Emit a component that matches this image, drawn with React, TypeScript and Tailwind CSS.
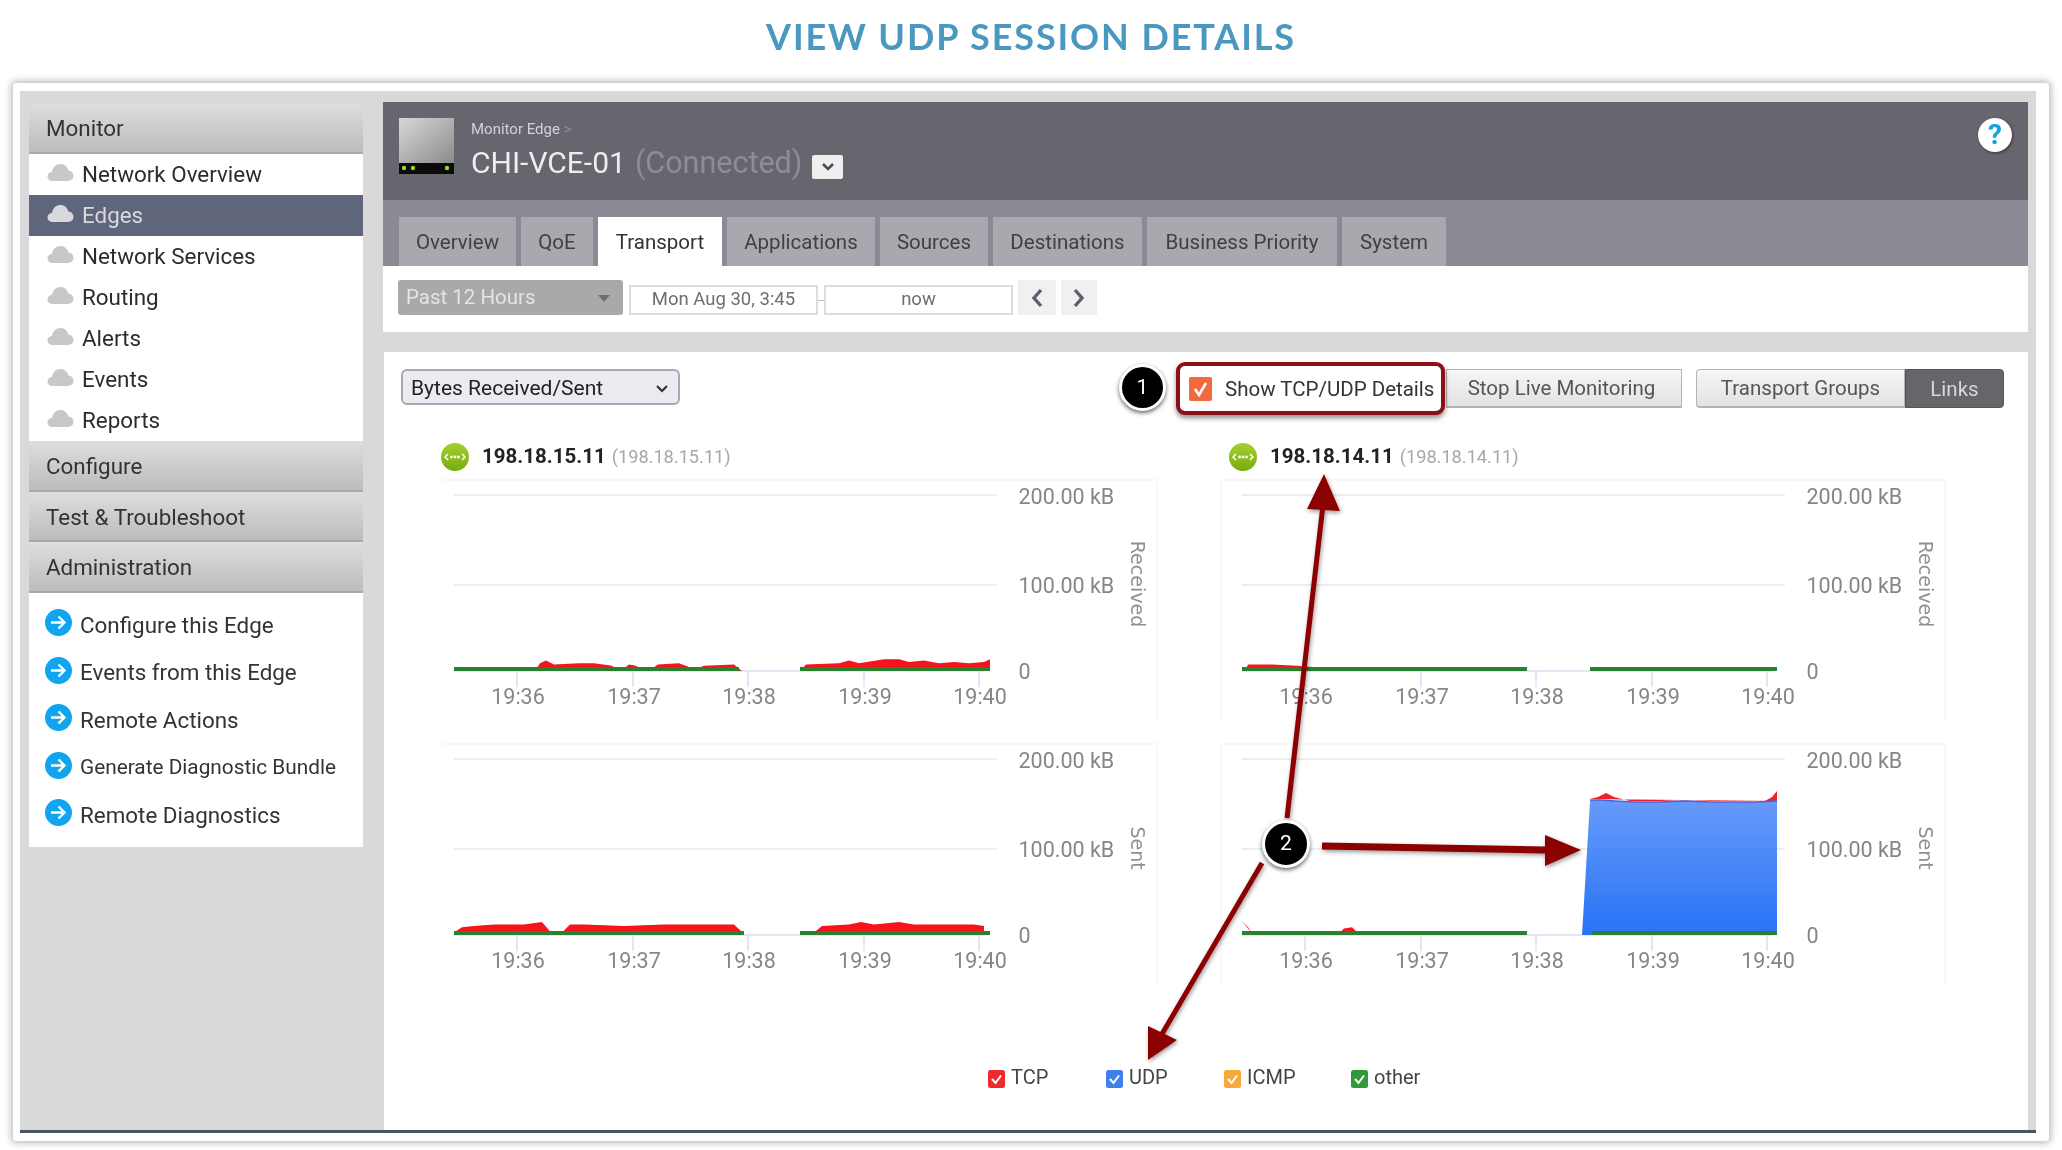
import React from "react";

const font = { fontFamily: "Roboto, 'Liberation Sans', sans-serif" };

function Cloud({ light }: { light?: boolean }) {
  return (
    <svg width="27" height="20" viewBox="0 0 27 20" className="shrink-0">
      <path
        d="M6 19C2.6 19 .5 17 .5 14.4 .5 11.8 2.6 10 5 10c.6-4.5 4-8 8.4-8 4 0 7 2.6 7.9 6.4 3.2.2 5.2 2.6 5.2 5.4 0 3-2.2 5.2-5.5 5.2z"
        fill={light ? "#d8d8de" : "#c8c8c8"}
      />
    </svg>
  );
}

function GoIcon() {
  return (
    <svg width="27" height="27" viewBox="0 0 27 27" className="shrink-0 -mt-[5px]">
      <circle cx="13.5" cy="13.5" r="13.5" fill="#10a5ee" />
      <path d="M6 13.5h13M13.5 7.5l6 6-6 6" fill="none" stroke="#fff" strokeWidth="2.4" />
    </svg>
  );
}

function NodeIcon() {
  return (
    <svg width="28" height="28" viewBox="0 0 28 28" className="shrink-0">
      <defs>
        <linearGradient id="ng" x1="0" y1="0" x2="0" y2="1">
          <stop offset="0" stopColor="#a6d02e" />
          <stop offset="1" stopColor="#75ad10" />
        </linearGradient>
      </defs>
      <circle cx="14" cy="14" r="14" fill="url(#ng)" />
      <path d="M7 11l-3 3 3 3M21 11l3 3-3 3" fill="none" stroke="#fff" strokeWidth="1.5" />
      <circle cx="10.5" cy="14" r="1.4" fill="#fff" />
      <circle cx="14" cy="14" r="1.4" fill="#fff" />
      <circle cx="17.5" cy="14" r="1.4" fill="#fff" />
    </svg>
  );
}

function Header({ children }: { children: React.ReactNode }) {
  return (
    <div className="h-[50.5px] flex items-center pl-[17px] pt-[3px] text-[22.4px] text-[#333] bg-gradient-to-b from-[#dedede] to-[#bcbcbc] border-b-2 border-[#a9a9a9]">
      {children}
    </div>
  );
}

const monitorItems = ["Network Overview", "Edges", "Network Services", "Routing", "Alerts", "Events", "Reports"];
const adminItems = ["Configure this Edge", "Events from this Edge", "Remote Actions", "Generate Diagnostic Bundle", "Remote Diagnostics"];
const tabs: [string, number][] = [
  ["Overview", 117],
  ["QoE", 72],
  ["Transport", 124],
  ["Applications", 148],
  ["Sources", 108],
  ["Destinations", 149],
  ["Business Priority", 190],
  ["System", 104],
];

type P = [number, number];

function area(points: P[], base: number, ox: number, k = 1) {
  return points.map(([x, h]) => `${x + ox},${base - h * k}`).join(" ");
}

const redTopLeft: P[] = [
  [81, 0], [86, 6], [92, 8], [100, 5], [125, 6], [140, 6], [158, 4], [165, 0], [170, 2], [175, 5], [182, 4], [188, 1],
  [196, 1], [204, 5], [225, 6], [235, 3], [240, 1], [250, 4], [280, 5], [288, 0],
];
const redTopLeft2: P[] = [
  [346, 0], [352, 5], [385, 6], [395, 8], [405, 6], [430, 9], [445, 9], [455, 7], [470, 8], [485, 6], [500, 7], [515, 6], [530, 7], [536, 9], [536, 0],
];
const redBotLeft: P[] = [
  [0, 2], [8, 6], [20, 7], [40, 8], [70, 8], [88, 10], [97, 2], [108, 2], [116, 8], [130, 8], [170, 7], [210, 8], [280, 8], [290, 1],
];
const redBotLeft2: P[] = [
  [346, 0], [360, 2], [368, 7], [395, 8], [407, 10], [420, 8], [445, 10], [460, 8], [495, 8], [520, 8], [530, 7], [530, 0],
];
const redTopRight: P[] = [[3, 0], [6, 5], [30, 5], [55, 4], [70, 3], [88, 0]];
const redBotRight: P[] = [[0, 11], [6, 6], [11, 0]];
const redBotRight2: P[] = [[95, 0], [102, 5], [110, 6], [118, 0]];
const blueTop: P[] = [
  [348, 135], [358, 135], [373, 134], [393, 133], [418, 133], [443, 134], [468, 133], [498, 133], [513, 133], [535, 134],
];
const blueRed: P[] = [
  [348, 136], [356, 138], [364, 142], [372, 138], [388, 134], [418, 134], [443, 135], [468, 134], [498, 134], [523, 134], [530, 138], [535, 144], [535, 134],
];

function Chart({
  reds,
  greens,
  label,
  blue,
  edge,
}: {
  reds: P[][];
  greens: [number, number][];
  label: string;
  blue?: boolean;
  edge?: boolean;
}) {
  const ox = 14;
  const base = 191;
  const ticks = [63, 179, 294, 410, 525];
  const times = ["19:36", "19:37", "19:38", "19:39", "19:40"];
  return (
    <svg width="740" height="264" viewBox="0 0 740 264" className="block overflow-visible" style={font}>
      <path d={edge ? "M-7 240V0H717V240" : "M2 0H717V240"} fill="none" stroke="#f6f6f6" strokeWidth="1.5" />
      <path d={`M${ox} 15H557M${ox} 105H557`} stroke="#eeeeee" strokeWidth="2" />
      <path d={`M${ox} ${base}H545`} stroke="#d6dff2" strokeWidth="1.5" />
      {ticks.map((t) => (
        <path key={t} d={`M${t + ox} ${base}v16`} stroke="#d6dff2" strokeWidth="1.5" />
      ))}
      {blue && (
        <>
          <defs>
            <linearGradient id="bg" x1="0" y1="0" x2="0" y2="1">
              <stop offset="0" stopColor="#669af9" />
              <stop offset="1" stopColor="#2873f6" />
            </linearGradient>
          </defs>
          <polygon points={area(blueRed, base, ox)} fill="#f0202c" />
          <polygon
            points={`${340 + ox},${base} ${348 + ox},${base - 134} ${area(blueTop, base, ox)} ${535 + ox},${base}`}
            fill="url(#bg)"
          />
          <polyline points={area(blueTop, base, ox)} fill="none" stroke="#4f63d8" strokeWidth="1.5" />
        </>
      )}
      {reds.map((r, i) => (
        <polygon key={i} points={area(r, base, ox, 1.3)} fill="#f5141c" />
      ))}
      {greens.map(([a, b]) => (
        <path key={a} d={`M${a + ox} ${base - 2}H${b + ox}`} stroke="#2a7f30" strokeWidth="4" />
      ))}
      <text x={578.5} y={24} fontSize="21.5" fill="#868686">200.00 kB</text>
      <text x={578.5} y={113} fontSize="21.5" fill="#868686">100.00 kB</text>
      <text x={578.5} y={199} fontSize="21.5" fill="#868686">0</text>
      {times.map((t, i) => (
        <text key={t} x={ticks[i] + ox + 1} y={224} fontSize="21.5" fill="#868686" textAnchor="middle">
          {t}
        </text>
      ))}
      <text
        x={691}
        y={104}
        fontSize="19"
        fill="#909090"
        textAnchor="middle"
        transform="rotate(90 691 104)"
        style={{ fontFamily: "'DejaVu Sans', sans-serif" }}
      >
        {label}
      </text>
    </svg>
  );
}

function Column({ ip, children }: { ip: string; children: React.ReactNode }) {
  return (
    <div className="w-[788px] shrink-0">
      <div className="h-[40px] flex items-center pl-[1px] pb-[7px]">
        <NodeIcon />
        <span className="ml-[13px] text-[20.5px] font-bold text-[#222]">{ip}</span>
        <span className="ml-[6px] text-[18.2px] text-[#a8a8a8]">({ip})</span>
      </div>
      {children}
    </div>
  );
}

function Legend({ color, label, w }: { color: string; label: string; w: string }) {
  return (
    <div className={`flex items-center gap-[6px] ${w}`}>
      <svg width="17" height="18" viewBox="0 0 17 18" className="shrink-0 mt-[2px]">
        <rect width="17" height="18" rx="2.5" fill={color} />
        <path d="M4 9l3.5 4L13 5.5" fill="none" stroke="#fff" strokeWidth="2" />
      </svg>
      <span className="text-[20px] text-[#444] -mt-[2px]">{label}</span>
    </div>
  );
}

export default function App() {
  return (
    <div className="relative w-[2062px] h-[1150px] bg-white overflow-hidden blur-[0.5px]" style={font}>
      <div className="h-[83px] pb-[12px] flex items-center justify-center">
        <h1 className="text-[36px] leading-none font-bold tracking-[1.9px] text-[#4a98bf]" style={{ fontFamily: "Lato, sans-serif" }}>
          VIEW UDP SESSION DETAILS
        </h1>
      </div>

      <div className="ml-[13px] w-[2036px] h-[1058px] bg-white rounded-[3px] shadow-[0_0_7px_2px_rgba(0,0,0,0.28)] pt-[8px] pl-[7px] pr-[13px]">
        <div className="w-[2016px] h-[1042px] bg-[#d9d9d9] border-b-[3px] border-[#4a5560] flex items-start pl-[9px] pt-[11px]">
          {/* Sidebar */}
          <div className="w-[334px] shrink-0 mt-[1px]">
            <Header>Monitor</Header>
            <div className="bg-white">
              {monitorItems.map((m) => (
                <div
                  key={m}
                  className={`h-[41.1px] flex items-center pl-[18px] gap-[8px] pt-[1px] text-[22.4px] ${
                    m === "Edges" ? "bg-[#5f667c] text-[#d8d8de]" : "text-[#2c2c2c]"
                  }`}
                >
                  <div className="-mt-[6px]">
                    <Cloud light={m === "Edges"} />
                  </div>
                  <span>{m}</span>
                </div>
              ))}
            </div>
            <Header>Configure</Header>
            <Header>Test &amp; Troubleshoot</Header>
            <Header>Administration</Header>
            <div className="bg-white h-[254px] pt-[9px] pl-[16px]">
              {adminItems.map((m) => (
                <div
                  key={m}
                  className={`h-[47.5px] flex items-center gap-[8px] text-[#333] ${
                    m.startsWith("Generate") ? "text-[20.8px]" : "text-[22.4px]"
                  }`}
                >
                  <GoIcon />
                  <span className="whitespace-nowrap">{m}</span>
                </div>
              ))}
            </div>
          </div>

          {/* Main */}
          <div className="ml-[20px] w-[1645px] shrink-0">
            <div className="h-[98px] bg-[#66666f] flex items-start justify-between pl-[16px] pr-[16px]">
              <div className="flex items-start">
                <svg width="55" height="56" viewBox="0 0 55 56" className="mt-[16px] shrink-0">
                  <defs>
                    <linearGradient id="dev" x1="0" y1="0" x2="1" y2="1">
                      <stop offset="0" stopColor="#d8d8d8" />
                      <stop offset="1" stopColor="#8b8b8b" />
                    </linearGradient>
                  </defs>
                  <rect width="55" height="45" fill="url(#dev)" />
                  <rect y="45" width="55" height="11" fill="#0b0b0b" />
                  <circle cx="5" cy="50" r="2.2" fill="#8ce01e" />
                  <circle cx="14" cy="50" r="2.2" fill="#8ce01e" />
                  <circle cx="48" cy="50" r="2.2" fill="#8ce01e" />
                </svg>
                <div className="ml-[17px] pt-[17px]">
                  <div className="text-[15px] leading-[20px] text-[#d2d2d6]">
                    Monitor Edge <span className="text-[#8e8e96]">&gt;</span>
                  </div>
                  <div className="mt-[4px] flex items-center text-[30px] leading-[40px]">
                    <span className="text-[#eeeeee]">CHI-VCE-01</span>
                    <span className="ml-[9px] text-[30.5px] text-[#8d8d95]">(Connected)</span>
                    <span className="ml-[10px] mt-[8px] w-[31px] h-[24px] bg-[#efefef] flex items-center justify-center rounded-[2px]">
                      <svg width="14" height="10" viewBox="0 0 14 10">
                        <path d="M2 2l5 5 5-5" fill="none" stroke="#444e5c" strokeWidth="2.6" />
                      </svg>
                    </span>
                  </div>
                </div>
              </div>
              <div className="mt-[16px] w-[34px] h-[34px] rounded-full bg-white flex items-center justify-center text-[28px] leading-none font-bold text-[#10a5d8] shadow-[1px_1px_3px_rgba(60,0,0,0.6)]">
                ?
              </div>
            </div>

            <div className="h-[66px] bg-[#8a8a94] flex items-end pl-[16px] gap-[5px]">
              {tabs.map(([t, w]) => (
                <div
                  key={t}
                  style={{ width: w }}
                  className={`h-[49px] flex items-center justify-center pt-[2px] text-[20.5px] ${
                    t === "Transport" ? "bg-white text-[#333]" : "bg-[#a8a8ae] text-[#3f3f46]"
                  }`}
                >
                  {t}
                </div>
              ))}
            </div>

            <div className="h-[66px] bg-white flex items-start pl-[15px] pt-[14px]">
              <div className="w-[225px] h-[35px] bg-[#a9a9a9] rounded-[3px] flex items-center justify-between pl-[8px] pr-[13px] text-[20.5px] text-[#e4e4e4]">
                <span>Past 12 Hours</span>
                <span className="w-0 h-0 border-x-[6px] border-t-[7px] border-x-transparent border-t-[#6f6f6f] mt-[2px]" />
              </div>
              <div className="ml-[6px] mt-[5px] w-[189px] h-[30px] border-2 border-[#dcdcdc] flex items-center justify-center text-[18.5px] text-[#6e6e6e]">
                Mon Aug 30, 3:45
              </div>
              <div className="mt-[20px] w-[6px] h-[1px] bg-[#bbb]" />
              <div className="mt-[5px] w-[189px] h-[30px] border-2 border-[#dcdcdc] flex items-center justify-center text-[18.5px] text-[#6e6e6e]">
                now
              </div>
              <div className="ml-[5px] w-[38px] h-[35px] bg-[#f0f0f0] flex items-center justify-center">
                <svg width="14" height="20" viewBox="0 0 14 20">
                  <path d="M11 2L4 10l7 8" fill="none" stroke="#5a616c" strokeWidth="3.4" />
                </svg>
              </div>
              <div className="ml-[5px] w-[36px] h-[35px] bg-[#f0f0f0] flex items-center justify-center">
                <svg width="14" height="20" viewBox="0 0 14 20">
                  <path d="M3 2l7 8-7 8" fill="none" stroke="#5a616c" strokeWidth="3.4" />
                </svg>
              </div>
            </div>

            <div className="h-[20px]" />

            <div className="h-[778px] bg-white ml-[1px] pt-[17px]">
              <div className="flex items-start h-[39px]">
                <div className="ml-[17px] w-[279px] h-[36px] border-2 border-[#a9a9b2] rounded-[6px] bg-[#ecebf1] flex items-center justify-between pl-[8px] pr-[9px] pt-[3px] text-[21px] text-[#222]">
                  <span>Bytes Received/Sent</span>
                  <svg width="14" height="10" viewBox="0 0 14 10">
                    <path d="M2 2l5 5 5-5" fill="none" stroke="#333" strokeWidth="2.2" />
                  </svg>
                </div>
                <div className="ml-auto mr-[1px] -mt-[7px] w-[269px] h-[53px] border-[4px] border-[#8c1018] rounded-[9px] bg-white shadow-[0_3px_5px_rgba(0,0,0,0.45)] flex items-center pl-[9px] pt-[1px] gap-[13px] z-10">
                  <svg width="23" height="24" viewBox="0 0 23 24" className="shrink-0 -mt-[1px]">
                    <rect width="23" height="24" rx="2" fill="#f1693c" />
                    <path d="M6 12l4 6 7-12" fill="none" stroke="#fff" strokeWidth="2.6" />
                  </svg>
                  <span className="text-[20.5px] text-[#333] whitespace-nowrap">Show TCP/UDP Details</span>
                </div>
                <div className="w-[236px] h-[39px] border border-[#b4b4b4] border-b-2 bg-gradient-to-b from-[#f6f6f6] to-[#e2e2e2] flex items-center justify-center pt-[1px] pr-[5px] text-[20.5px] text-[#555]">
                  Stop Live Monitoring
                </div>
                <div className="ml-[14px] w-[209px] h-[39px] border border-[#b4b4b4] border-b-2 rounded-l-[4px] bg-gradient-to-b from-[#f6f6f6] to-[#e2e2e2] flex items-center justify-center pt-[1px] text-[20.5px] text-[#555]">
                  Transport Groups
                </div>
                <div className="mr-[24px] w-[99px] h-[39px] rounded-r-[4px] bg-[#66666a] border border-[#555] flex items-center justify-center pt-[1px] text-[20.5px] text-[#d8d8d8]">
                  Links
                </div>
              </div>

              <div className="flex mt-[32px] ml-[56px]">
                <Column ip="198.18.15.11">
                  <Chart reds={[redTopLeft, redTopLeft2]} greens={[[0, 285], [346, 536]]} label="Received" />
                  <Chart reds={[redBotLeft, redBotLeft2]} greens={[[0, 290], [346, 536]]} label="Sent" />
                </Column>
                <Column ip="198.18.14.11">
                  <Chart reds={[redTopRight]} greens={[[0, 285], [348, 535]]} label="Received" edge />
                  <Chart reds={[redBotRight, redBotRight2]} greens={[[0, 285], [350, 535]]} label="Sent" blue edge />
                </Column>
              </div>

              <div className="flex items-center ml-[604px] mt-[58px] h-[24px]">
                <Legend color="#ee2a2a" label="TCP" w="w-[118px]" />
                <Legend color="#3f80ee" label="UDP" w="w-[118px]" />
                <Legend color="#f7a93a" label="ICMP" w="w-[127px]" />
                <Legend color="#2f9a38" label="other" w="w-[100px]" />
              </div>
            </div>
          </div>
        </div>
      </div>

      {/* annotation overlay */}
      <svg className="absolute left-0 top-0 pointer-events-none" width="2062" height="1150" viewBox="0 0 2062 1150">
        <defs>
          <filter id="sh" x="-10%" y="-10%" width="120%" height="120%">
            <feDropShadow dx="1" dy="2" stdDeviation="2" floodColor="#000" floodOpacity="0.4" />
          </filter>
        </defs>
        <g filter="url(#sh)" fill="#8b0000" stroke="none">
          <path d="M1287 818L1323 505" stroke="#8b0000" strokeWidth="5" />
          <polygon points="1324,474 1340,511 1307,509" />
          <path d="M1322 846L1546 850" stroke="#8b0000" strokeWidth="7" />
          <polygon points="1581,850 1545,835 1545,866" />
          <path d="M1262 863L1162 1034" stroke="#8b0000" strokeWidth="5" />
          <polygon points="1148,1060 1148,1026 1177,1040" />
        </g>
      </svg>
      <div className="absolute left-[1119px] top-[364px] w-[47px] h-[47px] rounded-full bg-black border-[3px] border-white shadow-[0_2px_4px_rgba(0,0,0,0.6)] flex items-center justify-center text-white text-[21px]">
        1
      </div>
      <div className="absolute left-[1262px] top-[820px] w-[48px] h-[48px] rounded-full bg-black border-[3px] border-white shadow-[0_2px_4px_rgba(0,0,0,0.6)] flex items-center justify-center text-white text-[21px]">
        2
      </div>
    </div>
  );
}
